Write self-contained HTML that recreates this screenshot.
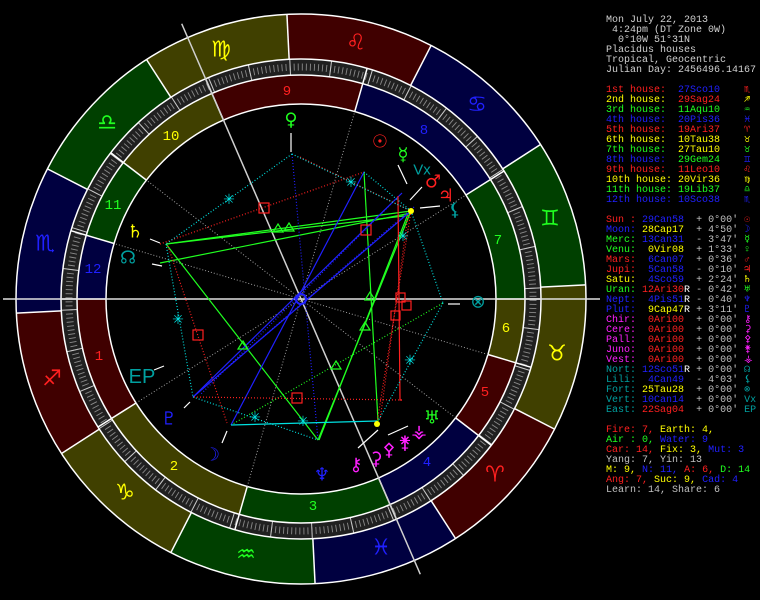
<!DOCTYPE html>
<html><head><meta charset="utf-8">
<style>
html,body{margin:0;padding:0;background:#000;width:760px;height:600px;overflow:hidden}
svg{position:absolute;left:0;top:0}
pre{position:absolute;left:606px;top:16px;margin:0;font-family:"Liberation Mono",monospace;font-size:10px;line-height:10px;color:#d0d0d0;white-space:pre}
.r{color:#ff2020}.y{color:#ffff00}.g{color:#20ff20}.b{color:#2020ff}.m{color:#ff20ff}.t{color:#00a0a0}.w{color:#fff}.s{color:#c0c0c0}
</style></head><body>
<svg width="600" height="600" viewBox="0 0 600 600" font-family="DejaVu Sans, sans-serif">
<g transform="translate(301,299)">
 <g fill="none" stroke-width="45">
  <circle r="262.5" stroke="#400000" stroke-dasharray="137.44 412.33" transform="rotate(27.17)"/>
  <circle r="262.5" stroke="#404000" stroke-dasharray="137.44 412.33" transform="rotate(-2.83)"/>
  <circle r="262.5" stroke="#004000" stroke-dasharray="137.44 412.33" transform="rotate(-32.83)"/>
  <circle r="262.5" stroke="#000040" stroke-dasharray="137.44 412.33" transform="rotate(-62.83)"/>
 </g>
 <circle r="232" fill="none" stroke="#202020" stroke-width="16"/>
 <circle r="232" fill="none" stroke="#8a8a8a" stroke-width="7" stroke-dasharray="0.9 3.1492" transform="rotate(57.17)"/>
 <circle r="232" fill="none" stroke="#c8c8c8" stroke-width="16" stroke-dasharray="1 39.49" transform="rotate(57.17)"/>
 <g fill="none" stroke-width="29">
  <circle r="209.5" stroke="#400000" stroke-dasharray="117.85 1400" transform="rotate(-212.23)"/>
  <circle r="209.5" stroke="#404000" stroke-dasharray="152.73 1400" transform="rotate(-254)"/>
  <circle r="209.5" stroke="#004000" stroke-dasharray="144.17 1400" transform="rotate(-293.43)"/>
  <circle r="209.5" stroke="#000040" stroke-dasharray="106.11 1400" transform="rotate(37.55)"/>
  <circle r="209.5" stroke="#400000" stroke-dasharray="76.82 1400" transform="rotate(16.54)"/>
  <circle r="209.5" stroke="#404000" stroke-dasharray="60.48 1400" transform="rotate(0)"/>
  <circle r="209.5" stroke="#004000" stroke-dasharray="117.85 1400" transform="rotate(-32.23)"/>
  <circle r="209.5" stroke="#000040" stroke-dasharray="152.73 1400" transform="rotate(-74)"/>
  <circle r="209.5" stroke="#400000" stroke-dasharray="144.17 1400" transform="rotate(-113.43)"/>
  <circle r="209.5" stroke="#404000" stroke-dasharray="106.11 1400" transform="rotate(-142.45)"/>
  <circle r="209.5" stroke="#004000" stroke-dasharray="76.82 1400" transform="rotate(-163.46)"/>
  <circle r="209.5" stroke="#000040" stroke-dasharray="60.48 1400" transform="rotate(-180)"/>
 </g>
 <g fill="none" stroke="#fff" stroke-width="1.5">
  <circle r="285"/><circle r="240"/><circle r="224"/><circle r="195"/>
 </g>
 <g stroke="#fff" stroke-width="1.5">
  <line x1="240" x2="285" transform="rotate(27.17)"/><line x1="240" x2="285" transform="rotate(-2.83)"/>
  <line x1="240" x2="285" transform="rotate(-32.83)"/><line x1="240" x2="285" transform="rotate(-62.83)"/>
  <line x1="240" x2="285" transform="rotate(-92.83)"/><line x1="240" x2="285" transform="rotate(-122.83)"/>
  <line x1="240" x2="285" transform="rotate(-152.83)"/><line x1="240" x2="285" transform="rotate(-182.83)"/>
  <line x1="240" x2="285" transform="rotate(-212.83)"/><line x1="240" x2="285" transform="rotate(-242.83)"/>
  <line x1="240" x2="285" transform="rotate(-272.83)"/><line x1="240" x2="285" transform="rotate(-302.83)"/>
 </g>
 <g stroke="#fff" stroke-width="1.5">
  <line x1="195" x2="240" transform="rotate(-180)"/><line x1="195" x2="240" transform="rotate(-212.23)"/>
  <line x1="195" x2="240" transform="rotate(-254)"/><line x1="195" x2="240" transform="rotate(-293.43)"/>
  <line x1="195" x2="240" transform="rotate(37.55)"/><line x1="195" x2="240" transform="rotate(16.54)"/>
  <line x1="195" x2="240" transform="rotate(0)"/><line x1="195" x2="240" transform="rotate(-32.23)"/>
  <line x1="195" x2="240" transform="rotate(-74)"/><line x1="195" x2="240" transform="rotate(-113.43)"/>
  <line x1="195" x2="240" transform="rotate(-142.45)"/><line x1="195" x2="240" transform="rotate(-163.46)"/>
 </g>
 <g stroke="#a0a0a0" stroke-width="1" stroke-dasharray="1 2">
  <line x1="-195" x2="195" transform="rotate(-32.23)"/>
  <line x1="-195" x2="195" transform="rotate(-74)"/>
  <line x1="-195" x2="195" transform="rotate(-142.45)"/>
  <line x1="-195" x2="195" transform="rotate(-163.46)"/>
 </g>
 <line x1="-298" x2="299" stroke="#e0e0e0" stroke-width="1.5"/>
 <line x1="-300" x2="300" stroke="#d0d0d0" stroke-width="1.5" transform="rotate(-113.43)"/>
</g>

<g font-size="22" text-anchor="middle" dominant-baseline="central">
 <text x="495" y="475" fill="#ff2020">♈&#xFE0E;</text>
 <text x="557" y="354" fill="#ffff00">♉&#xFE0E;</text>
 <text x="550" y="219" fill="#20ff20">♊&#xFE0E;</text>
 <text x="477" y="105" fill="#2020ff">♋&#xFE0E;</text>
 <text x="356" y="43" fill="#ff2020">♌&#xFE0E;</text>
 <text x="221" y="50" fill="#ffff00">♍&#xFE0E;</text>
 <text x="107" y="123" fill="#20ff20">♎&#xFE0E;</text>
 <text x="45" y="244" fill="#2020ff">♏&#xFE0E;</text>
 <text x="52" y="379" fill="#ff2020">♐&#xFE0E;</text>
 <text x="125" y="493" fill="#ffff00">♑&#xFE0E;</text>
 <text x="246" y="555" fill="#20ff20">♒&#xFE0E;</text>
 <text x="381" y="548" fill="#2020ff">♓&#xFE0E;</text>
</g>
<g font-family="Liberation Mono, monospace" font-size="14" text-anchor="middle" dominant-baseline="central">
 <text x="99" y="357" fill="#ff2020">1</text><text x="174" y="467" fill="#ffff00">2</text>
 <text x="313" y="507" fill="#20ff20">3</text><text x="427" y="463" fill="#2020ff">4</text>
 <text x="485" y="393" fill="#ff2020">5</text><text x="506" y="329" fill="#ffff00">6</text>
 <text x="498" y="241" fill="#20ff20">7</text><text x="424" y="131" fill="#2020ff">8</text>
 <text x="287" y="92" fill="#ff2020">9</text><text x="171" y="137" fill="#ffff00">10</text>
 <text x="113" y="206" fill="#20ff20">11</text><text x="93" y="270" fill="#2020ff">12</text>
</g>

<g fill="none" stroke-width="1.2">
 <g stroke="#20ff20">
  <line x1="166" y1="244" x2="411" y2="211"/><line x1="166" y1="244" x2="404" y2="216"/>
  <line x1="160" y1="263" x2="411" y2="213"/><line x1="166" y1="244" x2="318" y2="440"/>
  <line x1="318" y1="440" x2="411" y2="211"/><line x1="319" y1="440" x2="408" y2="214"/>
  <line x1="364" y1="172" x2="378" y2="421"/>
 </g>
 <line x1="231" y1="425" x2="443" y2="303" stroke="#20ff20" stroke-dasharray="1 2"/>
 <g stroke="#2020ff">
  <line x1="364" y1="172" x2="231" y2="425"/><line x1="411" y1="211" x2="193" y2="397"/>
  <line x1="402" y1="193" x2="193" y2="397"/>
 </g>
 <g stroke="#2020ff" stroke-dasharray="1 2">
  <line x1="292" y1="154" x2="318" y2="440"/><line x1="414" y1="207" x2="193" y2="397"/>
  <line x1="395" y1="200" x2="200" y2="395"/>
 </g>
 <polyline points="398,196 400,400 402,400" stroke="#ff2020"/>
 <g stroke="#ff2020" stroke-dasharray="1 2">
  <line x1="402" y1="400" x2="193" y2="397"/><line x1="160" y1="244" x2="364" y2="172"/>
  <line x1="167" y1="243" x2="227" y2="423"/><line x1="411" y1="211" x2="377" y2="423"/>
  <line x1="408" y1="215" x2="380" y2="420"/><line x1="300" y1="157" x2="411" y2="211"/>
 </g>
 <g stroke="#00e0e0" stroke-dasharray="1 2">
  <line x1="292" y1="154" x2="166" y2="244"/><line x1="292" y1="154" x2="411" y2="211"/>
  <line x1="166" y1="244" x2="193" y2="397"/><line x1="193" y1="397" x2="318" y2="440"/>
  <line x1="411" y1="211" x2="443" y2="303"/><line x1="443" y1="303" x2="377" y2="423"/>
  <line x1="364" y1="172" x2="411" y2="211"/>
 </g>
 <line x1="231" y1="425" x2="377" y2="421" stroke="#00e0e0"/>
 <g stroke="#ff2020">
  <rect x="259" y="203" width="10" height="10"/><rect x="361" y="225" width="10" height="10"/>
  <rect x="396" y="293" width="9" height="9"/><rect x="402" y="301" width="9" height="9"/>
  <rect x="391" y="311" width="9" height="9"/><rect x="193" y="330" width="10" height="10"/>
  <rect x="292" y="393" width="10" height="10"/>
 </g>
 <g stroke="#20ff20">
  <polygon points="278,224 283,232 273,232"/><polygon points="289,223 294,231 284,231"/>
  <polygon points="370,292 375,300 365,300"/><polygon points="365,322 370,330 360,330"/>
  <polygon points="243,341 248,349 238,349"/><polygon points="336,361 341,369 331,369"/>
 </g>
</g>
<g fill="#00e0e0" font-size="14" text-anchor="middle" dominant-baseline="central">
 <text x="229" y="200">✳</text><text x="351" y="183">✳</text><text x="403" y="237">✳</text>
 <text x="178" y="320">✳</text><text x="410" y="361">✳</text><text x="255" y="418">✳</text>
 <text x="303" y="422">✳</text>
</g>
<circle cx="301" cy="299" r="5" fill="none" stroke="#2020ff" stroke-width="2"/>
<circle cx="411" cy="211" r="3" fill="#ffff00"/><circle cx="377" cy="424" r="3" fill="#ffff00"/>

<g stroke="#fff" stroke-width="1.2">
 <line x1="291" y1="133" x2="291" y2="152"/><line x1="398" y1="165" x2="407" y2="184"/>
 <line x1="422" y1="187" x2="410" y2="200"/><line x1="440" y1="206" x2="420" y2="208"/>
 <line x1="150" y1="239" x2="160" y2="243"/><line x1="152" y1="264" x2="162" y2="266"/>
 <line x1="154" y1="370" x2="164" y2="366"/><line x1="184" y1="408" x2="190" y2="402"/>
 <line x1="222" y1="443" x2="227" y2="431"/><line x1="358" y1="448" x2="378" y2="430"/>
 <line x1="388" y1="435" x2="408" y2="426"/><line x1="460" y1="304" x2="448" y2="304"/>
</g>
<g font-size="18" text-anchor="middle" dominant-baseline="central">
 <text x="291" y="120" fill="#20ff20">♀</text>
 <text x="380" y="142" fill="#ff2020">☉</text>
 <text x="403" y="155" fill="#20ff20">☿</text>
 <text x="422" y="170" fill="#00a0a0" font-family="Liberation Sans" font-size="15">Vx</text>
 <text x="433" y="182" fill="#ff2020">♂</text>
 <text x="446" y="196" fill="#ff2020">♃</text>
 <text x="455" y="210" fill="#00a0a0">⚸</text>
 <text x="135" y="232" fill="#ffff00">♄</text>
 <text x="128" y="258" fill="#00a0a0">☊</text>
 <text x="142" y="377" fill="#00a0a0" font-family="Liberation Sans" font-size="20">EP</text>
 <text x="169" y="419" fill="#2020ff">♇</text>
 <text x="212" y="455" fill="#2020ff">☽</text>
 <text x="322" y="475" fill="#2020ff">♆</text>
 <text x="356" y="465" fill="#ff20ff">⚷</text>
 <text x="376" y="459" fill="#ff20ff">⚳</text>
 <text x="389" y="450" fill="#ff20ff">⚴</text>
 <text x="405" y="443" fill="#ff20ff">⚵</text>
 <text x="419" y="432" fill="#ff20ff">⚶</text>
 <text x="432" y="418" fill="#20ff20">♅</text>
 <text x="478" y="302" fill="#00a0a0">⊗</text>
</g>
</svg>
<pre>Mon July 22, 2013
 4:24pm (DT Zone 0W)
  0°10W 51°31N
Placidus houses
Tropical, Geocentric
Julian Day: 2456496.14167

<span class="r">1st house:</span>  <span class="b">27Sco10</span>    <span class="r">♏</span>
<span class="y">2nd house:</span>  <span class="r">29Sag24</span>    <span class="y">♐</span>
<span class="g">3rd house:</span>  <span class="g">11Aqu10</span>    <span class="g">♒</span>
<span class="b">4th house:</span>  <span class="b">20Pis36</span>    <span class="b">♓</span>
<span class="r">5th house:</span>  <span class="r">19Ari37</span>    <span class="r">♈</span>
<span class="y">6th house:</span>  <span class="y">10Tau38</span>    <span class="y">♉</span>
<span class="g">7th house:</span>  <span class="y">27Tau10</span>    <span class="g">♉</span>
<span class="b">8th house:</span>  <span class="g">29Gem24</span>    <span class="b">♊</span>
<span class="r">9th house:</span>  <span class="r">11Leo10</span>    <span class="r">♌</span>
<span class="y">10th house:</span> <span class="y">20Vir36</span>    <span class="y">♍</span>
<span class="g">11th house:</span> <span class="g">19Lib37</span>    <span class="g">♎</span>
<span class="b">12th house:</span> <span class="b">10Sco38</span>    <span class="b">♏</span>

<span class="r">Sun :</span> <span class="b">29Can58</span>  <span class="s">+ 0°00'</span> <span class="r">☉</span>
<span class="b">Moon:</span> <span class="y">28Cap17</span>  <span class="s">+ 4°50'</span> <span class="b">☽</span>
<span class="g">Merc:</span> <span class="b">13Can31</span>  <span class="s">- 3°47'</span> <span class="g">☿</span>
<span class="g">Venu:</span> <span class="y"> 0Vir08</span>  <span class="s">+ 1°33'</span> <span class="g">♀</span>
<span class="r">Mars:</span> <span class="b"> 6Can07</span>  <span class="s">+ 0°36'</span> <span class="r">♂</span>
<span class="r">Jupi:</span> <span class="b"> 5Can58</span>  <span class="s">- 0°10'</span> <span class="r">♃</span>
<span class="y">Satu:</span> <span class="b"> 4Sco59</span>  <span class="s">+ 2°24'</span> <span class="y">♄</span>
<span class="g">Uran:</span> <span class="r">12Ari30</span><span class="w">R</span> <span class="s">- 0°42'</span> <span class="g">♅</span>
<span class="b">Nept:</span> <span class="b"> 4Pis51</span><span class="w">R</span> <span class="s">- 0°40'</span> <span class="b">♆</span>
<span class="b">Plut:</span> <span class="y"> 9Cap47</span><span class="w">R</span> <span class="s">+ 3°11'</span> <span class="b">♇</span>
<span class="m">Chir:</span> <span class="r"> 0Ari00</span>  <span class="s">+ 0°00'</span> <span class="m">⚷</span>
<span class="m">Cere:</span> <span class="r"> 0Ari00</span>  <span class="s">+ 0°00'</span> <span class="m">⚳</span>
<span class="m">Pall:</span> <span class="r"> 0Ari00</span>  <span class="s">+ 0°00'</span> <span class="m">⚴</span>
<span class="m">Juno:</span> <span class="r"> 0Ari00</span>  <span class="s">+ 0°00'</span> <span class="m">⚵</span>
<span class="m">Vest:</span> <span class="r"> 0Ari00</span>  <span class="s">+ 0°00'</span> <span class="m">⚶</span>
<span class="t">Nort:</span> <span class="b">12Sco51</span><span class="w">R</span> <span class="s">+ 0°00'</span> <span class="t">☊</span>
<span class="t">Lili:</span> <span class="b"> 4Can49</span>  <span class="s">- 4°03'</span> <span class="t">⚸</span>
<span class="t">Fort:</span> <span class="y">25Tau28</span>  <span class="s">+ 0°00'</span> <span class="t">⊗</span>
<span class="t">Vert:</span> <span class="b">10Can14</span>  <span class="s">+ 0°00'</span> <span class="t">Vx</span>
<span class="t">East:</span> <span class="r">22Sag04</span>  <span class="s">+ 0°00'</span> <span class="t">EP</span>

<span class="r">Fire: 7,</span> <span class="y">Earth: 4,</span>
<span class="g">Air : 0,</span> <span class="b">Water: 9</span>
<span class="r">Car: 14,</span> <span class="y">Fix: 3,</span> <span class="b">Mut: 3</span>
<span class="s">Yang: 7, Yin: 13</span>
<span class="y">M: 9,</span> <span class="b">N: 11,</span> <span class="r">A: 6,</span> <span class="g">D: 14</span>
<span class="r">Ang: 7,</span> <span class="y">Suc: 9,</span> <span class="b">Cad: 4</span>
<span class="s">Learn: 14, Share: 6</span></pre>
</body></html>
